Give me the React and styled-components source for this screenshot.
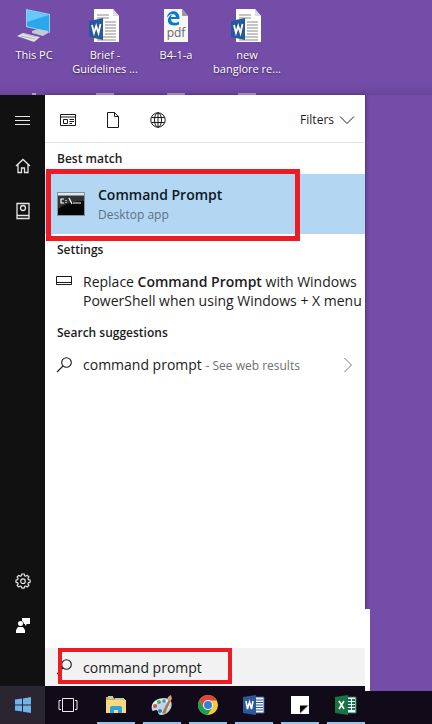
import React from "react";
import styled, { createGlobalStyle } from "styled-components";

const GlobalStyle = createGlobalStyle`
  *, *::before, *::after { box-sizing: border-box; }
  body {
    margin: 0;
    background: #744da9;
    font-family: "Open Sans", "Noto Sans", sans-serif;
    color: #1b1b1b;
  }
  button, input { font: inherit; color: inherit; border: 0; padding: 0; margin: 0; background: none; }
  svg { display: block; flex: none; }
`;

const Screen = styled.div`
  min-height: 100vh;
  display: flex;
  flex-direction: column;
  background: #744da9;
`;

const Shortcuts = styled.div`
  height: 95px;
  flex: none;
  display: flex;
  gap: 3px;
  overflow: hidden;
  background: linear-gradient(#744da9 88%, #6a469b);
`;

const Shortcut = styled.button`
  width: 68px;
  display: flex;
  flex-direction: column;
  align-items: center;
  justify-content: flex-start;
  padding-top: 8px;
  flex: none;
  color: #fff;
  font-size: 11px;
  line-height: 14px;
`;

const ShortcutLabel = styled.span`
  height: 42px;
  margin-top: 4px;
  white-space: pre;
  text-align: center;
  text-shadow: 0 1px 2px rgba(0, 0, 0, 0.6);
`;

const NextRowPeek = styled.span`
  flex: none;
  width: ${(p) => p.$width}px;
  height: 2px;
  margin-top: 3px;
  background: #b09acb;
`;

const StartMenu = styled.main`
  flex: 1;
  display: flex;
`;

const Rail = styled.nav`
  width: 45px;
  flex: none;
  display: flex;
  flex-direction: column;
  background: #111;
  color: #e6e6e6;
  padding: 3px 0 38px;
`;

const RailButton = styled.button`
  height: 45px;
  display: flex;
  align-items: center;
  justify-content: center;
`;

const Spacer = styled.div`
  flex: 1;
`;

const Panel = styled.section`
  position: relative;
  flex: 0 1 320px;
  min-width: 0;
  display: flex;
  flex-direction: column;
  background: #fff;
  box-shadow: 1px 0 3px rgba(40, 15, 75, 0.5);

  &::after {
    content: "";
    position: absolute;
    z-index: 2;
    left: 100%;
    bottom: -5px;
    width: 5px;
    height: 82px;
    background: #fff;
  }
`;

const FilterBar = styled.div`
  height: 48px;
  display: flex;
  align-items: center;
  padding: 2px 10px 0 0;
  border-bottom: 1px solid #e5e5e5;
`;

const FilterIcon = styled.button`
  width: 45px;
  height: 45px;
  display: flex;
  align-items: center;
  justify-content: center;
`;

const FiltersButton = styled.button`
  margin-left: auto;
  display: flex;
  align-items: center;
  gap: 5px;
  font-size: 12px;
  line-height: 16px;
`;

const GroupTitle = styled.h2`
  margin: 0;
  padding-left: 12px;
  height: 31px;
  font-size: 12px;
  line-height: 31px;
  font-weight: 600;
`;

const BestMatch = styled.button`
  position: relative;
  height: 60px;
  display: flex;
  align-items: center;
  gap: 13px;
  padding-left: 12px;
  background: #b3d6f2;
  text-align: left;
`;

const BestText = styled.span`
  display: flex;
  flex-direction: column;
`;

const BestName = styled.span`
  font-size: 14px;
  line-height: 21px;
  font-weight: 600;
  color: #0c1822;
`;

const BestKind = styled.span`
  font-size: 12px;
  line-height: 20px;
  color: #5b7185;
`;

const Highlight = styled.span`
  position: absolute;
  z-index: 1;
  pointer-events: none;
  left: ${(p) => p.$left}px;
  top: ${(p) => p.$top}px;
  bottom: ${(p) => p.$bottom}px;
  width: ${(p) => p.$width}px;
  border: ${(p) => p.$stroke}px solid #ea1c25;
`;

const ResultRow = styled.button`
  display: flex;
  align-items: ${(p) => (p.$top ? "flex-start" : "center")};
  gap: 11px;
  padding: 7px 12px 7px 11px;
  font-size: 14px;
  line-height: 19px;
  text-align: left;
`;

const ResultText = styled.span`
  flex: 1;
  min-width: 0;
  white-space: nowrap;

  strong { font-weight: 600; }
`;

const Hint = styled.span`
  font-size: 12px;
  color: #6f6f6f;
`;

const SearchBox = styled.label`
  position: relative;
  margin-top: auto;
  height: 38px;
  display: flex;
  align-items: center;
  gap: 11px;
  padding-left: 11px;
  background: #f2f2f2;
`;

const SearchInput = styled.input`
  flex: 1;
  min-width: 0;
  height: 38px;
  font-size: 14px;
  outline: 0;
`;

const Taskbar = styled.footer`
  display: flex;
  align-items: flex-end;
`;

const TaskButtons = styled.div`
  flex: 0 1 370px;
  height: 38px;
  display: flex;
  background: #110b19;
`;

const TaskbarRest = styled.div`
  flex: 1;
  height: 33px;
  background: #110b19;
`;

const TaskButton = styled.button`
  width: ${(p) => (p.$app ? 46 : 45)}px;
  flex: none;
  display: flex;
  align-items: center;
  justify-content: center;
  position: relative;
  background: ${(p) => (p.$active ? "#2a2531" : "transparent")};
  margin-left: ${(p) => (p.$first ? 3 : 0)}px;

  &::after {
    content: "";
    display: ${(p) => (p.$app ? "block" : "none")};
    position: absolute;
    left: 4px;
    right: 4px;
    bottom: 0;
    height: 2px;
    background: #91c5ec;
  }
`;

const PcIcon = () => (
  <svg width="36" height="36" viewBox="0 0 36 36">
    <path d="M10 1 34 6v19L10 19z" fill="#8ed2f5" />
    <path d="M11 2.500 33 7v17L11 18z" fill="#29a9ec" />
    <path d="M11 2.500 33 7 11 14z" fill="#69c7f6" />
    <path d="m16 23 6-2 10 2v2l-5 3-11-3z" fill="#c2cad3" />
    <path d="M7 25 24 29l-6 5L1 28z" fill="#e0e3e8" />
    <path d="m5 28 14 3M9 26l12 3" stroke="#b1b8c1" fill="none" />
  </svg>
);

const WordFile = () => (
  <svg width="32" height="36" viewBox="0 0 32 36">
    <path d="M5 1h19l6 7v26H5z" fill="#fff" />
    <path d="M24 1v7h6" fill="#ded9e6" />
    <path d="M8 7h12M8 10h12M16 14h11M16 17h11M16 20h11M16 23h11M16 26h11M8 29h19M8 32h19" stroke="#898989" />
    <path d="M0 13 14 10v22L0 29z" fill="#28599f" />
    <path d="m3 17 2 8 2.200-7 2.300 7 2-9" fill="none" stroke="#fff" strokeWidth="1.800" />
  </svg>
);

const PdfFile = () => (
  <svg width="26" height="36" viewBox="0 0 26 36">
    <path d="M1 1h18l6 7v26H1z" fill="#f7f7f7" />
    <path d="M19 1v7h6z" fill="#9b99a1" />
    <path d="M4 9.500C5 1 17 1 16.500 11H8c0 4.500 5 4.500 8 2.500v3c-7 2.500-12 0-11-5.500 1-3 3-4 5-4.500-1.500 1-1.800 1.500-2 2.500h5C12.500 5 7 5 4 9.500z" fill="#0878ce" />
    <text x="13" y="29" textAnchor="middle" fontSize="12" fill="#666">pdf</text>
  </svg>
);

const line = { fill: "none", stroke: "currentColor" };

const MenuIcon = () => (
  <svg width="15" height="12" viewBox="0 0 15 12" {...line}><path d="M0 1.500h15M0 5.500h15M0 9.500h15" /></svg>
);
const HomeIcon = () => (
  <svg width="16" height="16" viewBox="0 0 16 16" {...line} strokeWidth="1.300"><path d="m1 8 7-6.500L15 8M3 6.500v8h3.500V10h3v4.500H13v-8" /></svg>
);
const NotebookIcon = () => (
  <svg width="16" height="18" viewBox="0 0 16 18" {...line} strokeWidth="1.300"><path d="M2 1.500h12v15H2zM2 13.500h12" /><circle cx="8" cy="6" r="2.500" /></svg>
);
const SettingsIcon = () => (
  <svg width="16" height="16" viewBox="0 0 16 16" {...line} strokeWidth="1.200" strokeLinejoin="round">
    <path d="M6.800 1h2.400l.4 1.800 1.100.5 1.600-1 1.600 1.600-1 1.600.5 1.200 1.700.3v2.300l-1.700.4-.5 1.200 1 1.500-1.600 1.600-1.600-1-1.100.5-.4 1.700H6.800L6.400 13.500l-1.200-.5-1.500 1-1.600-1.600 1-1.500-.5-1.200L1 9.300V7l1.600-.3.5-1.200-1-1.600 1.600-1.600 1.500 1 1.200-.5z" />
    <circle cx="8" cy="8.200" r="2.300" />
  </svg>
);
const FeedbackIcon = () => (
  <svg width="16" height="18" viewBox="0 0 16 18" fill="#fff">
    <path d="M7 1h8v6h-3l-2 2V7H9a4 4 0 0 0-2-3z" /><circle cx="5.500" cy="6.500" r="2.500" /><path d="M1 16v-3l2-3h5l2 3v3z" />
  </svg>
);
const AppsIcon = () => (
  <svg width="16" height="14" viewBox="0 0 16 14" {...line}><path d="M.5 1.500h15v11H.5zM.5 4h15M3.500 6.500h4v4h-4zM9.500 6.500H14M9.500 8.500H14M9.500 10.500H12" /></svg>
);
const DocumentIcon = () => (
  <svg width="14" height="16" viewBox="0 0 14 16" {...line}><path d="M1.500.5h7l4 4v11h-11zM8.500.5v4h4" /></svg>
);
const GlobeIcon = () => (
  <svg width="16" height="16" viewBox="0 0 16 16" {...line}><circle cx="8" cy="8" r="7.200" /><ellipse cx="8" cy="8" rx="3.500" ry="7.200" /><path d="M8 1v14M1.500 5.500h13M1.500 10.500h13" /></svg>
);
const ChevronDown = () => (
  <svg width="16" height="10" viewBox="0 0 16 10" {...line}><path d="m1 1.500 7 7 7-7" /></svg>
);
const ChevronRight = () => (
  <svg width="10" height="16" viewBox="0 0 10 16" fill="none" stroke="#777"><path d="m1.500 1 7 7-7 7" /></svg>
);
const SearchIcon = () => (
  <svg width="16" height="16" viewBox="0 0 16 16" {...line} strokeWidth="1.100"><circle cx="10.500" cy="5.500" r="4.800" /><path d="M7 9 1 15" /></svg>
);
const KeyboardIcon = () => (
  <svg width="16" height="19" viewBox="0 0 16 19" {...line}><path d="M.5 4.500h15v8H.5zM.5 10.500h15" /></svg>
);
const ConsoleIcon = () => (
  <svg width="28" height="24" viewBox="0 0 28 24">
    <path d="M0 0h28v24H0z" fill="#82919c" /><path d="M1 1h26v2H1z" fill="#e1e6e9" /><path d="M1 4h26v19H1z" fill="#050505" />
    <path d="M1 4h26v5Q11 9 1 17z" fill="#333" />
    <path d="M7 7H4v4h3M9 8v1M9 10v1M12 6l3 6M16 11h8" fill="none" stroke="#fff" strokeWidth="1.200" />
  </svg>
);
const WindowsIcon = () => (
  <svg width="16" height="16" viewBox="0 0 16 16" fill="#70b5e9"><path d="M0 2.500 7 1.500v6H0zM8 1.400 16 0v7.500H8zM0 8.500h7v6l-7-1zM8 8.500h8V16l-8-1.300z" /></svg>
);
const TaskViewIcon = () => (
  <svg width="20" height="16" viewBox="0 0 20 16" fill="none" stroke="#eee"><path d="M4.500 1.500h11v13h-11zM3 3.500H1v9h2M17 3.500h2v9h-2" /></svg>
);
const FolderIcon = () => (
  <svg width="22" height="20" viewBox="0 0 22 20">
    <path d="M1 2h7l2 2h10v14H1z" fill="#dba94e" /><path d="M3 1h5v3H3zM10 3h9v2h-9z" fill="#b3d0a6" /><path d="M1 5h20v13H1z" fill="#f8d97f" />
    <path d="M5 18v-5q0-2 2-2h8q2 0 2 2v5h-4v-3H9v3z" fill="#2da4dc" />
  </svg>
);
const PaintIcon = () => (
  <svg width="24" height="24" viewBox="0 0 24 24">
    <path d="M2 17C0 9 7 5 14 5c7 0 9 5 7 10-2 4-5 7-10 7-4 0-2-5-5-5-2 0-3 2-4 0z" fill="#bad6e8" />
    <path d="M3 14c1-6 8-8 14-6 3 4 0 10-6 12" fill="none" stroke="#edf7fc" strokeWidth="2" />
    <circle cx="5" cy="13" r="2" fill="#d94b43" /><circle cx="9" cy="9" r="2" fill="#55a65a" /><circle cx="14" cy="8" r="1.800" fill="#4c89bc" /><circle cx="10" cy="18" r="2" fill="#3276b0" />
    <path d="m12 20 7-14 2 1-6 14z" fill="#b5763d" /><path d="M18 7c-1-3 1-4 3-5l1 4-2 2z" fill="#dba06b" />
  </svg>
);
const ChromeIcon = () => (
  <svg width="22" height="22" viewBox="0 0 22 22">
    <circle cx="11" cy="11" r="10" fill="#f5cc36" />
    <path d="M2.300 6A10 10 0 0 1 20 6.500h-9A5 5 0 0 0 6.700 13.500z" fill="#df4537" />
    <path d="M2.300 6A10 10 0 0 0 10.500 21L15.300 13.500A5 5 0 0 1 6.700 13.500z" fill="#269b52" />
    <circle cx="11" cy="11" r="5" fill="#f4f7fa" /><circle cx="11" cy="11" r="4" fill="#367fd9" />
  </svg>
);
const OfficeIcon = ({ color, excel }) => (
  <svg width="22" height="22" viewBox="0 0 22 22">
    <path d="M10 3h11v16H10z" fill="#f2f5fa" stroke={color} />
    <path d={excel ? "M13 6h3M17 6h3M13 9h3M17 9h3M13 12h3M17 12h3M13 15h3M17 15h3" : "M13 6h7M13 8.500h7M13 11h7M13 13.500h7M13 16h7"} stroke={color} strokeWidth={excel ? 1.800 : 1} />
    <path d="M0 3 13 1v20L0 19z" fill={color} />
    <path d={excel ? "m4 7 5 8M9 7l-5 8" : "m3 7 1.500 8L6.500 8l2 7L10 7"} fill="none" stroke="#fff" strokeWidth="1.600" />
  </svg>
);
const NotesIcon = () => (
  <svg width="18" height="18" viewBox="0 0 18 18">
    <path d="M0 0h18v9l-9 9H0z" fill="#fff" />
    <path d="M18 9v9H9z" fill="#fff" />
    <path d="M9 9.500h8L9 17z" fill="#050505" />
  </svg>
);

const shortcuts = [
  { label: "This PC", icon: <PcIcon />, peek: 4 },
  { label: "Brief -\nGuidelines ...", icon: <WordFile />, peek: 18 },
  { label: "B4-1-a", icon: <PdfFile />, peek: 18 },
  { label: "new\nbanglore re...", icon: <WordFile />, peek: 18 },
];

const apps = [
  ["File Explorer", <FolderIcon />],
  ["Paint", <PaintIcon />],
  ["Chrome", <ChromeIcon />],
  ["Word", <OfficeIcon color="#2c5799" />],
  ["Sticky Notes", <NotesIcon />],
  ["Excel", <OfficeIcon color="#197342" excel />],
];

export default function App() {
  return (
    <Screen>
      <GlobalStyle />
      <Shortcuts>
        {shortcuts.map((s) => (
          <Shortcut key={s.label}>
            {s.icon}
            <ShortcutLabel>{s.label}</ShortcutLabel>
            <NextRowPeek $width={s.peek} />
          </Shortcut>
        ))}
      </Shortcuts>

      <StartMenu>
        <Rail>
          <RailButton aria-label="Menu"><MenuIcon /></RailButton>
          <RailButton aria-label="Home"><HomeIcon /></RailButton>
          <RailButton aria-label="Notebook"><NotebookIcon /></RailButton>
          <Spacer />
          <RailButton aria-label="Settings"><SettingsIcon /></RailButton>
          <RailButton aria-label="Feedback"><FeedbackIcon /></RailButton>
        </Rail>

        <Panel>
          <FilterBar>
            <FilterIcon aria-label="Apps"><AppsIcon /></FilterIcon>
            <FilterIcon aria-label="Documents"><DocumentIcon /></FilterIcon>
            <FilterIcon aria-label="Web"><GlobeIcon /></FilterIcon>
            <FiltersButton>Filters<ChevronDown /></FiltersButton>
          </FilterBar>

          <GroupTitle>Best match</GroupTitle>
          <BestMatch>
            <ConsoleIcon />
            <BestText>
              <BestName>Command Prompt</BestName>
              <BestKind>Desktop app</BestKind>
            </BestText>
            <Highlight $left={1} $top={-5} $bottom={-7} $width={254} $stroke={5} />
          </BestMatch>

          <GroupTitle>Settings</GroupTitle>
          <ResultRow $top>
            <KeyboardIcon />
            <ResultText>
              Replace <strong>Command Prompt</strong> with Windows<br />
              PowerShell when using Windows + X menu
            </ResultText>
          </ResultRow>

          <GroupTitle>Search suggestions</GroupTitle>
          <ResultRow>
            <SearchIcon />
            <ResultText>command prompt <Hint>- See web results</Hint></ResultText>
            <ChevronRight />
          </ResultRow>

          <SearchBox>
            <SearchIcon />
            <SearchInput aria-label="Search" type="text" defaultValue="command prompt" />
            <Highlight $left={13} $top={0} $bottom={2} $width={174} $stroke={4} />
          </SearchBox>
        </Panel>
      </StartMenu>

      <Taskbar>
        <TaskButtons>
          <TaskButton $active aria-label="Start"><WindowsIcon /></TaskButton>
          <TaskButton aria-label="Task view"><TaskViewIcon /></TaskButton>
          {apps.map(([name, icon], i) => (
            <TaskButton key={name} $app $first={i === 0} aria-label={name}>{icon}</TaskButton>
          ))}
        </TaskButtons>
        <TaskbarRest />
      </Taskbar>
    </Screen>
  );
}
